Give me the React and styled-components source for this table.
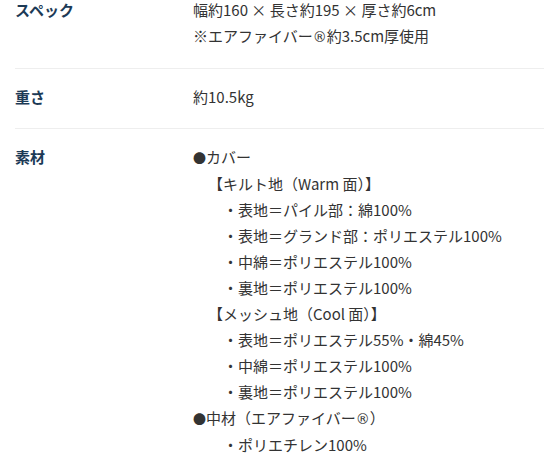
import React from 'react';
import styled, { createGlobalStyle } from 'styled-components';

const GlobalStyle = createGlobalStyle`
  html, body {
    margin: 0;
    padding: 0;
    background: #fff;
  }
  body {
    font-family: "Noto Sans CJK JP", "Noto Sans", sans-serif;
    color: #333;
    overflow: hidden;
  }
`;

const SpecTable = styled.dl`
  margin: -18px 0 0 15px;
  padding: 0;
`;

const Row = styled.div`
  display: grid;
  grid-template-columns: 178px 1fr;
  padding: 15px 0 18px;
  border-bottom: 1px solid #eeeeee;
`;

const Label = styled.dt`
  margin: 0;
  font-size: 15px;
  line-height: 26px;
  font-weight: 700;
  color: #1c3a56;
`;

const Value = styled.dd`
  margin: 0;
  font-size: 15px;
  line-height: 26px;
  color: #333;
`;

const Line = styled.div`
  padding-left: ${(p) => (p.indent || 0) * 15}px;
  white-space: nowrap;
`;

// ®は等倍の丸Rで表示
const Reg = styled.span`
  font-family: "DejaVu Sans", sans-serif;
  font-size: 14px;
`;

const Bullet = styled.span`
  display: inline-block;
  width: 13px;
  font-size: 13px;
`;

const R = () => <Reg>®</Reg>;

// 素材の中身は行ごとにインデント段数を持たせる
const materials = [
  [<><Bullet>●</Bullet>カバー</>, 0],
  [<>【キルト地（Warm 面）】</>, 1],
  [<>・表地＝パイル部：綿100%</>, 2],
  [<>・表地＝グランド部：ポリエステル100%</>, 2],
  [<>・中綿＝ポリエステル100%</>, 2],
  [<>・裏地＝ポリエステル100%</>, 2],
  [<>【メッシュ地（Cool 面）】</>, 1],
  [<>・表地＝ポリエステル55%・綿45%</>, 2],
  [<>・中綿＝ポリエステル100%</>, 2],
  [<>・裏地＝ポリエステル100%</>, 2],
  [<><Bullet>●</Bullet>中材（エアファイバー<R />）</>, 0],
  [<>・ポリエチレン100%</>, 2],
];

const App = () => (
  <>
    <GlobalStyle />
    <SpecTable>
      <Row>
        <Label>スペック</Label>
        <Value>
          <Line>幅約160 × 長さ約195 × 厚さ約6cm</Line>
          <Line>※エアファイバー<R />約3.5cm厚使用</Line>
        </Value>
      </Row>
      <Row>
        <Label>重さ</Label>
        <Value>
          <Line>約10.5kg</Line>
        </Value>
      </Row>
      <Row>
        <Label>素材</Label>
        <Value>
          {materials.map(([text, indent], i) => (
            <Line key={i} indent={indent}>
              {text}
            </Line>
          ))}
        </Value>
      </Row>
    </SpecTable>
  </>
);

export default App;
